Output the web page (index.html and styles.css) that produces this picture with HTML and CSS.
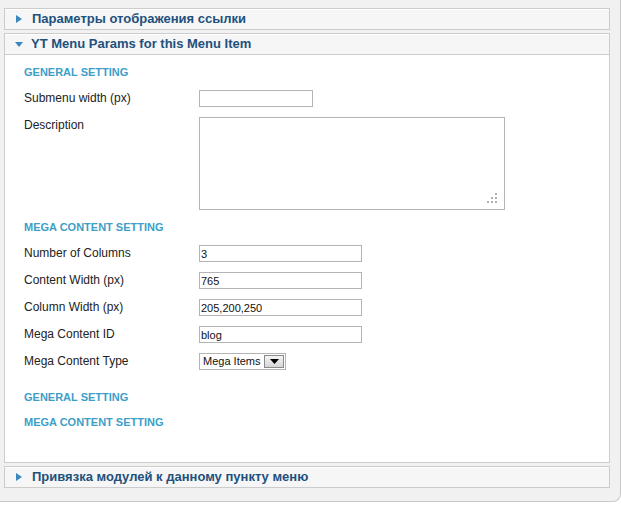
FILE: index.html
```html
<!DOCTYPE html>
<html>
<head>
<meta charset="utf-8">
<link rel="stylesheet" href="styles.css">
</head>
<body>
<div class="wrap">
  <div class="panel">
    <div class="panel-head">
      <svg class="arr-right" width="6" height="8" viewBox="0 0 6 8"><polygon points="0,0 6,4 0,8" fill="#3b86bf"/></svg>
      <span>Параметры отображения ссылки</span>
    </div>
  </div>

  <div class="panel open">
    <div class="panel-head">
      <svg class="arr-down" width="8" height="5" viewBox="0 0 8 5"><polygon points="0,0 8,0 4,5" fill="#3b86bf"/></svg>
      <span>YT Menu Params for this Menu Item</span>
    </div>
    <div class="panel-body">
      <div class="section">GENERAL SETTING</div>
      <div class="row">
        <div class="label">Submenu width (px)</div>
        <div class="field"><input class="inp short" type="text" value=""></div>
      </div>
      <div class="row">
        <div class="label">Description</div>
        <div class="field ta-wrap">
          <textarea class="ta"></textarea>
          <svg class="grip" width="10" height="10" viewBox="0 0 10 10">
            <rect x="8" y="0" width="2" height="2" fill="#b0b0b0"/>
            <rect x="4" y="4" width="2" height="2" fill="#b0b0b0"/>
            <rect x="8" y="4" width="2" height="2" fill="#b0b0b0"/>
            <rect x="0" y="8" width="2" height="2" fill="#b0b0b0"/>
            <rect x="4" y="8" width="2" height="2" fill="#b0b0b0"/>
            <rect x="8" y="8" width="2" height="2" fill="#b0b0b0"/>
          </svg>
        </div>
      </div>

      <div class="section">MEGA CONTENT SETTING</div>
      <div class="row">
        <div class="label">Number of Columns</div>
        <div class="field"><input class="inp" type="text" value="3"></div>
      </div>
      <div class="row">
        <div class="label">Content Width (px)</div>
        <div class="field"><input class="inp" type="text" value="765"></div>
      </div>
      <div class="row">
        <div class="label">Column Width (px)</div>
        <div class="field"><input class="inp" type="text" value="205,200,250"></div>
      </div>
      <div class="row">
        <div class="label">Mega Content ID</div>
        <div class="field"><input class="inp" type="text" value="blog"></div>
      </div>
      <div class="row">
        <div class="label">Mega Content Type</div>
        <div class="field">
          <div class="select">
            <span class="sel-text">Mega Items</span>
            <span class="sel-btn"><svg width="9" height="5" viewBox="0 0 9 5"><polygon points="0,0 9,0 4.5,5" fill="#000"/></svg></span>
          </div>
        </div>
      </div>

      <div class="section gap">GENERAL SETTING</div>
      <div class="section">MEGA CONTENT SETTING</div>
    </div>
  </div>

  <div class="panel">
    <div class="panel-head">
      <svg class="arr-right" width="6" height="8" viewBox="0 0 6 8"><polygon points="0,0 6,4 0,8" fill="#3b86bf"/></svg>
      <span>Привязка модулей к данному пункту меню</span>
    </div>
  </div>
</div>
</body>
</html>
```

FILE: styles.css
```css
html, body {
  margin: 0;
  padding: 0;
  background: #ffffff;
}

body {
  font-family: "Liberation Sans", Arial, sans-serif;
  color: #222;
}

.wrap {
  width: 606px;
  padding: 8px 10px 13px 4px;
  background: #f1f1f1;
  border-right: 1px solid #c9c9c9;
  border-bottom: 1px solid #c9c9c9;
  border-bottom-right-radius: 8px;
  display: flex;
  flex-direction: column;
  gap: 3px;
}

.panel {
  border: 1px solid #cccccc;
  background: #ffffff;
}

.panel-head {
  height: 20px;
  background: #f6f6f6;
  box-shadow: inset 0 1px 0 #ffffff;
  display: flex;
  align-items: center;
  padding-left: 10px;
  font-size: 13px;
  font-weight: bold;
  color: #22507c;
  line-height: 20px;
}

.panel.open .panel-head {
  border-bottom: 1px solid #cccccc;
}

.arr-right {
  margin-left: 1px;
  margin-right: 10px;
}

.arr-down {
  margin-right: 8px;
}

.panel-body {
  padding: 5px 0 27px 19px;
}

.section {
  height: 25px;
  line-height: 25px;
  font-size: 11px;
  font-weight: bold;
  color: #3d9ec8;
}

.section.gap {
  margin-top: 10px;
}

.row {
  display: flex;
  align-items: flex-start;
  padding: 5px 0;
}

.label {
  width: 175px;
  font-size: 12px;
  line-height: 16px;
  height: 17px;
  color: #222;
}

.field {
  display: flex;
}

.inp {
  box-sizing: border-box;
  display: block;
  width: 163px;
  height: 17px;
  border: 1px solid #b4b4b4;
  padding: 1px 1px 0;
  margin: 0;
  font-family: "Liberation Sans", Arial, sans-serif;
  font-size: 11px;
  color: #111;
  background: #fff;
  outline: none;
}

.inp.short {
  width: 114px;
}

.ta-wrap {
  position: relative;
  height: 93px;
}

.ta {
  box-sizing: border-box;
  display: block;
  width: 306px;
  height: 93px;
  border: 1px solid #b4b4b4;
  margin: 0;
  padding: 1px;
  resize: none;
  background: #fff;
  outline: none;
}

.grip {
  position: absolute;
  right: 8px;
  bottom: 7px;
}

.select {
  box-sizing: border-box;
  width: 87px;
  height: 17px;
  border: 1px solid #b4b4b4;
  background: #fff;
  display: flex;
  align-items: center;
  justify-content: space-between;
  padding: 0 1px 0 3px;
  font-size: 11px;
  color: #111;
}

.sel-text {
  line-height: 15px;
}

.sel-btn {
  box-sizing: border-box;
  width: 20px;
  height: 13px;
  border: 1px solid #8a8a8a;
  background: linear-gradient(#f4f4f4, #d6d6d6);
  display: flex;
  align-items: center;
  justify-content: center;
}
```
